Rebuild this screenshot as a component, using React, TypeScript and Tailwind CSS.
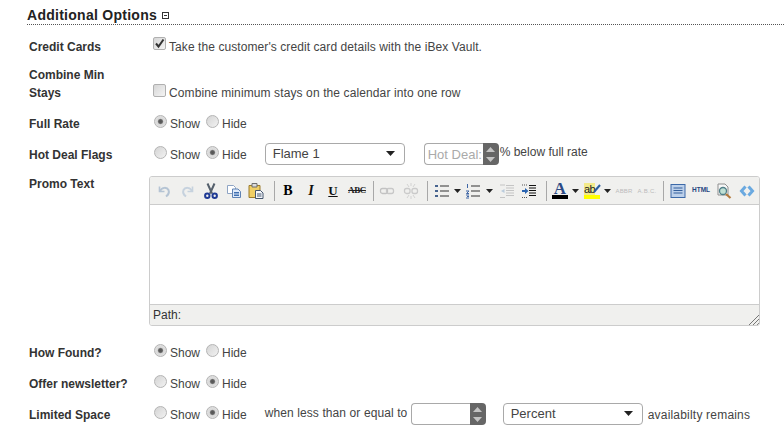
import React from "react";

function Radio({ checked = false, name }: { checked?: boolean; name: string }) {
  return (
    <input
      type="radio"
      name={name}
      defaultChecked={checked}
      className="appearance-none block shrink-0 w-[13px] h-[13px] rounded-full border border-[#b4b4b4] -mt-[4px] bg-[linear-gradient(135deg,#d4d4d4,#f2f2f2)] checked:bg-[radial-gradient(circle,#555_0,#5f5f5f_24%,#d8d8d8_40%,#e8e8e8_100%)]"
    />
  );
}

function ShowHide({ value, name }: { value: "show" | "hide"; name: string }) {
  return (
    <div className="flex items-center">
      <div className="ml-[5px]">
        <Radio name={name} checked={value === "show"} />
      </div>
      <span className="ml-[3px] w-[36px] pt-[2px]">Show</span>
      <Radio name={name} checked={value === "hide"} />
      <span className="ml-[3px] pt-[2px]">Hide</span>
    </div>
  );
}

function Check({ checked = false, className }: { checked?: boolean; className: string }) {
  return (
    <div className={`relative w-[13px] h-[13px] shrink-0 ${className}`}>
      <input
        type="checkbox"
        defaultChecked={checked}
        className="appearance-none block w-[13px] h-[13px] rounded-[2px] border border-[#b0b0b0] bg-[linear-gradient(135deg,#d6d6d6,#f4f4f4)]"
      />
      {checked && (
        <svg width="11" height="11" viewBox="0 0 11 11" className="absolute left-[1px] top-[1px] pointer-events-none">
          <path d="M2 5.500l2.500 3L9.500 1.500" fill="none" stroke="#333" strokeWidth="2" />
        </svg>
      )}
    </div>
  );
}

function Row({ label, className, children }: { label: React.ReactNode; className: string; children?: React.ReactNode }) {
  return (
    <div className={`flex items-center ${className}`}>
      <div className="w-[149px] shrink-0 pl-[29px] pt-[2px] font-bold text-[#333] text-[12px]">{label}</div>
      {children}
    </div>
  );
}

function Caret() {
  return (
    <svg width="9" height="5" viewBox="0 0 9 5" className="absolute right-[10px] top-[8px] pointer-events-none">
      <path d="M0 0h9L4.500 5z" fill="#222" />
    </svg>
  );
}

function Select({ value }: { value: string }) {
  return (
    <div className="relative w-[140px] h-[22px] shrink-0">
      <select className="appearance-none w-full h-full bg-white border border-[#a9a9a9] rounded-[4px] pl-[7px] text-[13px] text-[#444] leading-[16px] outline-none">
        <option>{value}</option>
      </select>
      <Caret />
    </div>
  );
}

function Spin() {
  return (
    <div className="w-[16px] h-[22px] bg-[#666] rounded-r-[4px] flex flex-col items-center justify-center gap-[5px] shrink-0">
      <svg width="9" height="5" viewBox="0 0 9 5"><path d="M0 5h9L4.500 0z" fill="#c4c4c4" /></svg>
      <svg width="9" height="5" viewBox="0 0 9 5"><path d="M0 0h9L4.500 5z" fill="#c4c4c4" /></svg>
    </div>
  );
}

function NumberBox({ placeholder }: { placeholder?: string }) {
  return (
    <div className="flex shrink-0">
      <input
        placeholder={placeholder}
        className="w-[59px] h-[22px] border border-[#a9a9a9] border-r-0 rounded-l-[4px] bg-white pl-[3px] text-[13px] text-[#444] placeholder:text-[#aaa] outline-none"
      />
      <Spin />
    </div>
  );
}

function Ico({ ml, children }: { ml: string; children: React.ReactNode }) {
  return <div className={`w-4 h-4 shrink-0 flex items-center justify-center whitespace-nowrap ${ml}`}>{children}</div>;
}
function Sep({ ml }: { ml: string }) {
  return <div className={`w-px h-[20px] bg-[#a8a8a8] shrink-0 ${ml}`} />;
}
function Arrow({ ml }: { ml: string }) {
  return (
    <div className={`w-2 shrink-0 flex justify-center ${ml}`}>
      <svg width="7" height="4" viewBox="0 0 7 4"><path d="M0 0h7L3.500 4z" fill="#222" /></svg>
    </div>
  );
}

const S = ({ children }: { children: React.ReactNode }) => (
  <svg width="16" height="16" viewBox="0 0 16 16" fill="none" className="shrink-0">{children}</svg>
);

function Toolbar() {
  return (
    <div className="h-[28px] bg-[#f0f0ee] border-b border-[#ccc] flex items-center shrink-0">
      <Ico ml="ml-[6px]">
        <S><path d="M3.500 3.500v5h5" stroke="#b5c4d4" strokeWidth="1.600" /><path d="M4 8c2-4 7-4 8.500-1 1 2.500-.5 5-2.500 6.500" stroke="#b5c4d4" strokeWidth="2" /></S>
      </Ico>
      <Ico ml="ml-[8px]">
        <S><path d="M12.500 3.500v5h-5" stroke="#c6d2de" strokeWidth="1.600" /><path d="M12 8c-2-4-7-4-8.500-1-1 2.500.5 5 2.500 6.500" stroke="#c6d2de" strokeWidth="2" /></S>
      </Ico>
      <Ico ml="ml-[7px]">
        <S>
          <path d="M4.500 0.500l4.500 10M11.500 0.500L7 10.500" stroke="#55606c" strokeWidth="2" />
          <circle cx="4.300" cy="12.700" r="2.200" stroke="#1f3a94" strokeWidth="2" />
          <circle cx="11.700" cy="12.700" r="2.200" stroke="#1f3a94" strokeWidth="2" />
        </S>
      </Ico>
      <Ico ml="ml-[7px]">
        <S>
          <path d="M1.500 2.500h6l2 2v6h-8z" fill="#fff" stroke="#8ea4c4" />
          <path d="M6.500 6h5.500l2.500 2.500v6h-8z" fill="#dfeafa" stroke="#5f82b4" />
          <path d="M8 9.500h5M8 11h5M8 12.500h5" stroke="#3f6fb0" />
        </S>
      </Ico>
      <Ico ml="ml-[6px]">
        <S>
          <path d="M1 2.500h11v12H1z" fill="#f0cf66" stroke="#9a7b2c" />
          <path d="M4 0.500h5v3.500H4z" fill="#dcdcdc" stroke="#6f6f6f" />
          <path d="M7.500 7.500h5l2.500 2.500v5.500H7.500z" fill="#f6f8fb" stroke="#44566f" />
          <path d="M9 11h4.500M9 13h4.500" stroke="#44566f" />
        </S>
      </Ico>
      <Sep ml="ml-[10px]" />
      <Ico ml="ml-[5px]">
        <span className="font-['Liberation_Serif',serif] font-bold text-[14px] text-black leading-none">B</span>
      </Ico>
      <Ico ml="ml-[7px]">
        <span className="font-['Liberation_Serif',serif] font-bold italic text-[14px] text-[#111] leading-none">I</span>
      </Ico>
      <Ico ml="ml-[6px]">
        <span className="font-['Liberation_Serif',serif] font-bold underline text-[13px] text-[#111] leading-none">U</span>
      </Ico>
      <Ico ml="ml-[8px]">
        <span className="font-['Liberation_Serif',serif] font-bold line-through text-[9px] tracking-[-0.4px] text-[#222] leading-none">ABC</span>
      </Ico>
      <Sep ml="ml-[8px]" />
      <Ico ml="ml-[5px]">
        <S>
          <rect x="1.500" y="5.500" width="7" height="5" rx="2" stroke="#c2c2c2" strokeWidth="1.300" />
          <rect x="7.500" y="5.500" width="7" height="5" rx="2" stroke="#c8c8c8" strokeWidth="1.300" />
        </S>
      </Ico>
      <Ico ml="ml-[8px]">
        <S>
          <rect x="1.500" y="5.500" width="5.500" height="5" rx="2" stroke="#cacaca" strokeWidth="1.300" />
          <rect x="9" y="5.500" width="5.500" height="5" rx="2" stroke="#cacaca" strokeWidth="1.300" />
          <path d="M8 0v3M4 1l2 3M12 1l-2 3M8 13v3M4 15l2-3M12 15l-2-3" stroke="#d2d2d2" />
        </S>
      </Ico>
      <Sep ml="ml-[8px]" />
      <Ico ml="ml-[6px]">
        <S>
          <path d="M1 2.500h3M1 3.500h3M1 7.500h3M1 8.500h3M1 12.500h3M1 13.500h3" stroke="#47648f" />
          <path d="M6 3h9M6 8h9M6 13h9" stroke="#333" />
        </S>
      </Ico>
      <Arrow ml="ml-[3px]" />
      <Ico ml="ml-[4px]">
        <S>
          <path d="M2.500 1v4M1 8h3L1.500 10.500H4M1 12h3M2 13.500h2M1 15h3" stroke="#3f67a6" />
          <path d="M6 3h9M6 8h9M6 13h9" stroke="#333" />
        </S>
      </Ico>
      <Arrow ml="ml-[4px]" />
      <Ico ml="ml-[6px]">
        <S>
          <path d="M7 2.500h8M7 5h8M7 7.500h8M7 10h8M7 12.500h8M1 14.500h5M1 2h5" stroke="#c4c4c4" />
          <path d="M5.500 6v4L2 8z" fill="#b9cbdc" />
        </S>
      </Ico>
      <Ico ml="ml-[6px]">
        <S>
          <path d="M8 2.500h7M8 5h7M8 7.500h7M8 10h7M8 12.500h7" stroke="#111" />
          <path d="M1 2h5M1 14.500h5" stroke="#555" strokeDasharray="1 1" />
          <path d="M1 7h3V5l3.500 3L4 11V9H1z" fill="#2a64b0" />
        </S>
      </Ico>
      <Sep ml="ml-[9px]" />
      <Ico ml="ml-[5px]">
        <div className="flex flex-col items-center w-4">
          <span className="font-['Liberation_Serif',serif] font-bold text-[17px] text-[#2c4a86] leading-[13px]">A</span>
          <div className="w-4 h-[4px] bg-black" />
        </div>
      </Ico>
      <Arrow ml="ml-[3px]" />
      <Ico ml="ml-[5px]">
        <div className="relative flex flex-col w-4">
          <span className="text-[11px] leading-[12px] text-[#222] bg-[#f3ea8a] w-[11px] tracking-[-0.5px]">ab</span>
          <div className="w-4 h-[4px] bg-[#ffff00]" />
          <svg width="8" height="10" viewBox="0 0 8 10" className="absolute right-[-1px] top-[1px]"><path d="M7 1L1 8" stroke="#2b5e9e" strokeWidth="2" /></svg>
        </div>
      </Ico>
      <Arrow ml="ml-[3px]" />
      <Ico ml="ml-[5px]">
        <span className="text-[6px] text-[#bbb] leading-none tracking-[0.2px]">ABBR</span>
      </Ico>
      <Ico ml="ml-[7px]">
        <span className="text-[6px] text-[#bbb] leading-none tracking-[0.3px]">A.B.C.</span>
      </Ico>
      <Sep ml="ml-[8px]" />
      <Ico ml="ml-[6px]">
        <S>
          <rect x="1" y="1.500" width="14" height="13" fill="#bcd0ea" stroke="#3c69a8" />
          <path d="M3.500 5h9M3.500 7.500h9M3.500 10h9" stroke="#335f9c" />
        </S>
      </Ico>
      <Ico ml="ml-[7px]">
        <span className="font-bold text-[6.500px] text-[#24467f] leading-none">HTML</span>
      </Ico>
      <Ico ml="ml-[7px]">
        <S>
          <path d="M2 1h7l3 3v8H2z" fill="#f6f6f6" stroke="#8f8f8f" />
          <circle cx="7" cy="8" r="3.500" fill="#bfe0d4" stroke="#4f7f88" strokeWidth="1.300" />
          <path d="M10 11l4.500 4" stroke="#b47a3c" strokeWidth="2.200" />
        </S>
      </Ico>
      <Ico ml="ml-[7px]">
        <S>
          <path d="M6.500 3.500L2.500 8l4 4.500" stroke="#6aa9e0" strokeWidth="3" />
          <path d="M9.500 3.500L13.500 8l-4 4.500" stroke="#6aa9e0" strokeWidth="3" />
        </S>
      </Ico>
    </div>
  );
}

function Editor() {
  return (
    <div className="w-[611px] h-[150px] border border-[#ccc] rounded-[3px] flex flex-col shrink-0 overflow-hidden">
      <Toolbar />
      <div className="flex-1 bg-white" />
      <div className="relative h-[21px] shrink-0 bg-[#f0f0ee] border-t border-[#ccc] pl-[3px] text-[12px] leading-[20px] text-[#333]">
        Path:
        <svg width="11" height="11" viewBox="0 0 11 11" className="absolute right-0 bottom-0">
          <path d="M11 1L1 11M11 5L5 11M11 9L9 11" stroke="#777" />
        </svg>
      </div>
    </div>
  );
}

export default function App() {
  return (
    <div className="w-[784px] h-[441px] overflow-hidden bg-white font-['Liberation_Sans',Arial,sans-serif] text-[12px] text-[#444]">
      <div className="ml-[27px] h-[25px] border-b border-dotted border-[#555] flex items-center pt-[6px]">
        <span className="font-bold text-[14px] text-[#222] tracking-[0.27px]">Additional Options</span>
        <svg width="7" height="7" viewBox="0 0 7 7" className="ml-[5px]">
          <rect x="0.500" y="0.500" width="6" height="6" fill="none" stroke="#333" />
          <path d="M2 3.500h3" stroke="#333" />
        </svg>
      </div>

      <Row label="Credit Cards" className="mt-[11px] h-[20px]">
        <Check checked className="ml-[4px] -mt-[5px]" />
        <span className="ml-[3px] pt-[2px] tracking-[0.08px]">Take the customer's credit card details with the iBex Vault.</span>
      </Row>

      <div className="mt-[10px] h-[36px] flex items-end">
        <div className="w-[149px] shrink-0 pl-[29px] font-bold text-[#333] text-[12px] leading-[18px]">
          Combine Min<br />Stays
        </div>
        <div className="flex items-center h-[18px]">
          <Check className="ml-[4px] -mt-[5px]" />
          <span className="ml-[3px] tracking-[0.11px]">Combine minimum stays on the calendar into one row</span>
        </div>
      </div>

      <Row label="Full Rate" className="mt-[11px] h-[20px]">
        <ShowHide value="show" name="full" />
      </Row>

      <Row label="Hot Deal Flags" className="mt-[10px] h-[22px]">
        <ShowHide value="hide" name="hot" />
        <div className="ml-[18px]"><Select value="Flame 1" /></div>
        <div className="ml-[19px]"><NumberBox placeholder="Hot Deal:" /></div>
        <span className="ml-[1px] -mt-[4px]">% below full rate</span>
      </Row>

      <div className="mt-[11px] flex items-start">
        <div className="w-[149px] shrink-0 pl-[29px] -mt-[1px] font-bold text-[#333] text-[12px]">Promo Text</div>
        <Editor />
      </div>

      <Row label="How Found?" className="mt-[16px] h-[20px]">
        <ShowHide value="show" name="found" />
      </Row>

      <Row label="Offer newsletter?" className="mt-[11px] h-[20px]">
        <ShowHide value="hide" name="news" />
      </Row>

      <Row label="Limited Space" className="mt-[10px] h-[22px]">
        <ShowHide value="hide" name="space" />
        <span className="ml-[18px] -mt-[2px] w-[146px] shrink-0 tracking-[0.1px]">when less than or equal to</span>
        <NumberBox />
        <div className="ml-[17px]"><Select value="Percent" /></div>
        <span className="ml-[5px] pt-[2px] tracking-[0.2px]">availabilty remains</span>
      </Row>
    </div>
  );
}
